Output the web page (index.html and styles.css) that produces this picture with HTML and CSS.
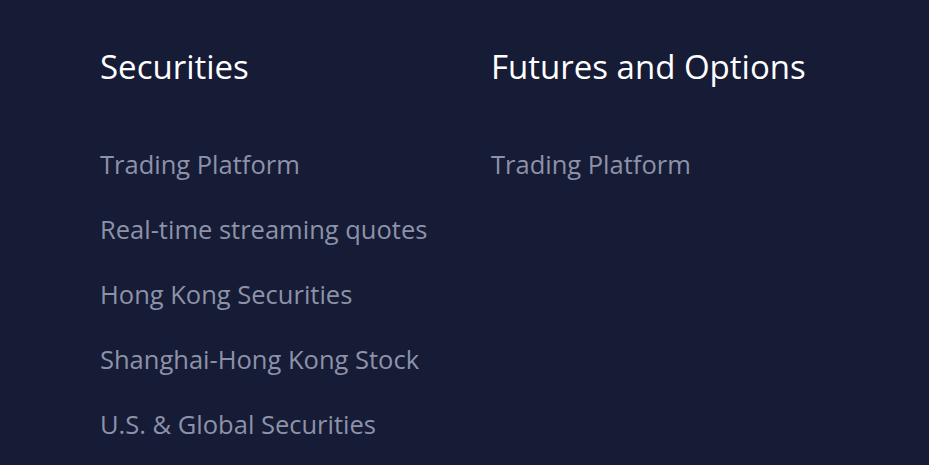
FILE: index.html
```html
<!DOCTYPE html>
<html>
<head>
<meta charset="utf-8">
<link rel="stylesheet" href="styles.css">
</head>
<body>
<div class="footer">
  <div class="col col-first">
    <h2 class="heading">Securities</h2>
    <ul class="links">
      <li>Trading Platform</li>
      <li>Real-time streaming quotes</li>
      <li>Hong Kong Securities</li>
      <li>Shanghai-Hong Kong Stock</li>
      <li>U.S. &amp; Global Securities</li>
    </ul>
  </div>
  <div class="col">
    <h2 class="heading">Futures and Options</h2>
    <ul class="links">
      <li>Trading Platform</li>
    </ul>
  </div>
</div>
</body>
</html>
```
FILE: styles.css
```css
html, body {
  margin: 0;
  padding: 0;
  background: #161b36;
  height: 100%;
  overflow: hidden;
}
.footer {
  display: flex;
  padding: 45px 0 0 100px;
  font-family: "Open Sans", "Noto Sans", sans-serif;
}
.col-first {
  width: 391px;
}
.heading {
  margin: 0;
  font-size: 33px;
  font-weight: 400;
  color: #ffffff;
  line-height: 44px;
}
.links {
  list-style: none;
  margin: 59px 0 0;
  padding: 0;
  display: flex;
  flex-direction: column;
  gap: 33px;
}
.links li {
  font-size: 25.5px;
  line-height: 32px;
  color: #8d92a8;
}
```
